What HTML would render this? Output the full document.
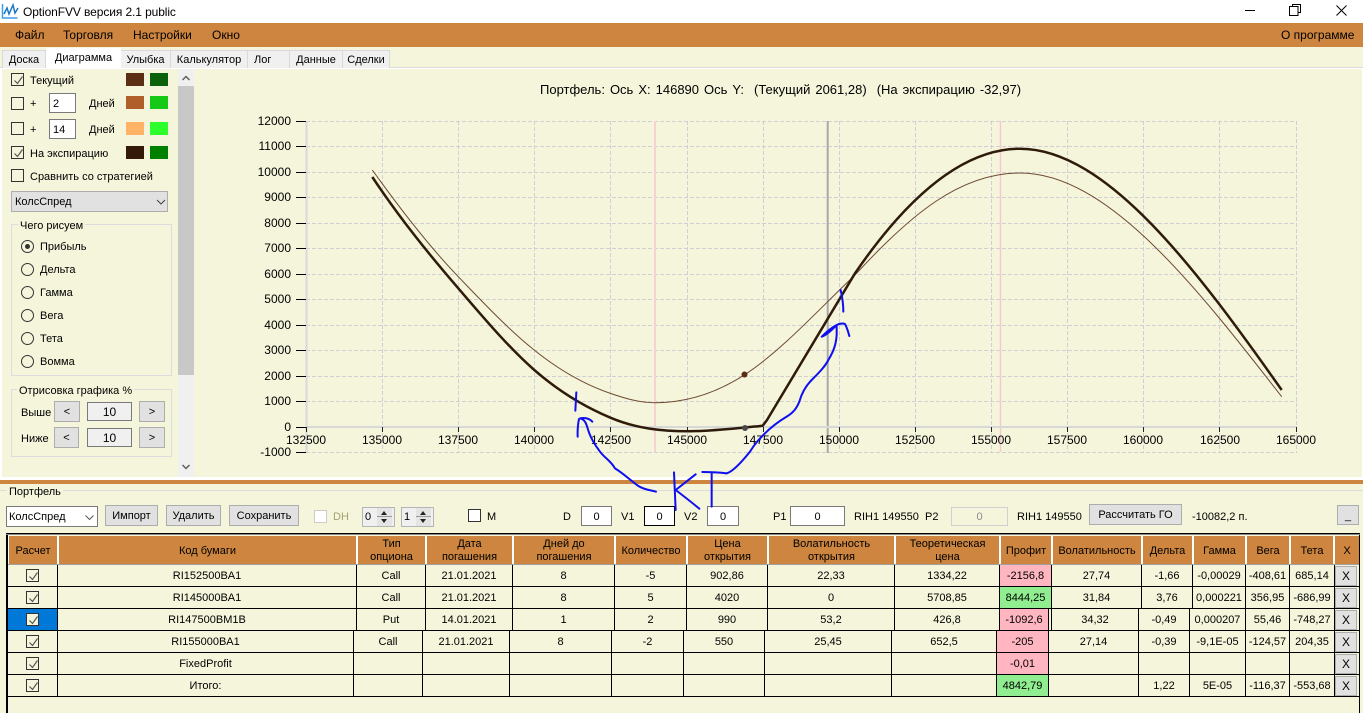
<!DOCTYPE html>
<html lang="ru"><head><meta charset="utf-8"><title>OptionFVV</title>
<style>
html,body{margin:0;padding:0}
body{width:1363px;height:713px;overflow:hidden;position:relative;background:#f5f5dc;font:11px/13px "Liberation Sans",sans-serif;color:#000}
div,span,svg{position:absolute;box-sizing:border-box}
.t{white-space:nowrap}
.tab{top:50px;height:18px;background:#f0f0f0;border:1px solid #d9d9d9;border-bottom:0;text-align:center;line-height:19px}
.cb{width:13px;height:13px;border:1px solid #333;background:#f5f5dc}
.cb svg{left:1px;top:1px}
.sw{width:18px;height:13px}
.tb{background:#fff;border:1px solid #7a7a7a;text-align:center;line-height:20px}
.btn{background:#e1e1e1;border:1px solid #adadad;text-align:center;line-height:20px}
.grp{border:1px solid #dcdcdc}
.lg{background:#f5f5dc;padding:0 2px;white-space:nowrap}
.rd{left:21px;width:13px;height:13px;border:1px solid #333;border-radius:50%;background:#f5f5dc}
.h{top:536px;height:28px;background:#cd853f;border-right:2px solid #fff;text-align:center;line-height:13px;display:flex;align-items:center;justify-content:center;padding-top:2px}
.row{left:8px;width:1351px;height:22px;border-bottom:1px solid #000}
.c{top:0;height:21px;border-right:1px solid #000;text-align:center;line-height:22px;white-space:nowrap}
.x{left:1327px;top:1px;width:22px;height:20px;background:#e1e1e1;border:1px solid #adadad;text-align:center;line-height:18px;font-size:12px}
.yl{left:250px;width:41px;text-align:right;font-size:12px;line-height:14px}
.xl{top:433px;width:60px;text-align:center;font-size:12px;line-height:14px}
.rl{left:40px}
.row .cb{top:4px}
</style></head><body>

<!-- title bar -->
<div style="left:0;top:0;width:1363px;height:23px;background:#fff"></div>
<svg style="left:1px;top:3px" width="18" height="17" viewBox="0 0 18 17"><path d="M1.500 1v14h15" fill="none" stroke="#3a9ee8" stroke-width="1.500"/><path d="M3 11l3-6 2 6 4-9 2 8 3-5" fill="none" stroke="#1b78c8" stroke-width="1.500"/></svg>
<div class="t" style="left:23px;top:5px;font-size:12px;line-height:14px;letter-spacing:-.1px">OptionFVV версия 2.1 public</div>
<div style="left:1245px;top:10px;width:10px;height:1px;background:#000"></div>
<svg style="left:1289px;top:4px" width="12" height="12" viewBox="0 0 12 12"><path d="M3.500 2.500v-2h8v8h-2M.5 2.500h8.500v9H.5z" fill="#fff" stroke="#000"/></svg>
<svg style="left:1336px;top:5px" width="11" height="11" viewBox="0 0 11 11"><path d="M.5.5l10 10M10.500.5l-10 10" stroke="#000" fill="none"/></svg>

<!-- menu -->
<div style="left:0;top:23px;width:1363px;height:24px;background:#cd853f"></div>
<div class="t" style="left:15px;top:28px;font-size:12px;line-height:14px">Файл</div>
<div class="t" style="left:63px;top:28px;font-size:12px;line-height:14px">Торговля</div>
<div class="t" style="left:133px;top:28px;font-size:12px;line-height:14px">Настройки</div>
<div class="t" style="left:212px;top:28px;font-size:12px;line-height:14px">Окно</div>
<div class="t" style="left:1281px;top:28px;font-size:12px;line-height:14px">О программе</div>

<!-- tabs -->
<div style="left:0;top:67px;width:1363px;height:1px;background:#dcdcdc"></div>
<div style="left:0;top:68px;width:1363px;height:1px;background:#fff"></div>
<div class="tab" style="left:2px;width:44px">Доска</div>
<div class="tab" style="left:120px;width:51px">Улыбка</div>
<div class="tab" style="left:170px;width:78px">Калькулятор</div>
<div class="tab" style="left:247px;width:43px;text-align:left;padding-left:6px">Лог</div>
<div class="tab" style="left:289px;width:54px">Данные</div>
<div class="tab" style="left:342px;width:48px">Сделки</div>
<div class="tab" style="left:46px;top:48px;width:75px;height:21px;background:#fff;border:0;line-height:20px">Диаграмма</div>
<div style="left:0;top:68px;width:2px;height:410px;background:#fff"></div>
<div style="left:1362px;top:68px;width:1px;height:410px;background:#fff"></div>

<!-- left panel -->
<div class="cb" style="left:11px;top:73px"><svg width="11" height="11" viewBox="0 0 11 11"><path d="M1.500 5.500l3 3 5-7" fill="none" stroke="#555" stroke-width="1.200"/></svg></div>
<div class="t" style="left:30px;top:75px">Текущий</div>
<div class="sw" style="left:126px;top:73px;background:#5c2e14"></div>
<div class="sw" style="left:150px;top:73px;background:#0b620b"></div>

<div class="cb" style="left:11px;top:97px"></div>
<div class="t" style="left:30px;top:98px">+</div>
<div class="tb" style="left:49px;top:93px;width:27px;height:20px;text-align:left;padding-left:3px">2</div>
<div class="t" style="left:89px;top:98px">Дней</div>
<div class="sw" style="left:126px;top:96px;background:#b05f2b"></div>
<div class="sw" style="left:150px;top:96px;background:#16c916"></div>

<div class="cb" style="left:11px;top:122px"></div>
<div class="t" style="left:30px;top:124px">+</div>
<div class="tb" style="left:49px;top:119px;width:27px;height:20px;text-align:left;padding-left:3px">14</div>
<div class="t" style="left:89px;top:124px">Дней</div>
<div class="sw" style="left:126px;top:122px;background:#ffb366"></div>
<div class="sw" style="left:150px;top:122px;background:#2dff2d"></div>

<div class="cb" style="left:11px;top:146px"><svg width="11" height="11" viewBox="0 0 11 11"><path d="M1.500 5.500l3 3 5-7" fill="none" stroke="#555" stroke-width="1.200"/></svg></div>
<div class="t" style="left:30px;top:148px">На экспирацию</div>
<div class="sw" style="left:126px;top:146px;background:#341a08"></div>
<div class="sw" style="left:150px;top:146px;background:#008000"></div>

<div class="cb" style="left:11px;top:169px"></div>
<div class="t" style="left:30px;top:171px">Сравнить со стратегией</div>

<div style="left:11px;top:191px;width:157px;height:21px;background:#e1e1e1;border:1px solid #adadad;line-height:21px;padding-left:3px">КолсСпред
<svg style="left:144px;top:7px" width="10" height="6" viewBox="0 0 10 6"><path d="M1 1l4 4 4-4" fill="none" stroke="#444"/></svg></div>

<div class="grp" style="left:11px;top:224px;width:161px;height:152px"></div>
<div class="lg" style="left:18px;top:220px">Чего рисуем</div>
<div class="rd" style="top:240px"><div style="left:3px;top:3px;width:5px;height:5px;border-radius:50%;background:#333"></div></div>
<div class="t rl" style="top:241px">Прибыль</div>
<div class="rd" style="top:263px"></div><div class="t rl" style="top:264px">Дельта</div>
<div class="rd" style="top:286px"></div><div class="t rl" style="top:287px">Гамма</div>
<div class="rd" style="top:309px"></div><div class="t rl" style="top:310px">Вега</div>
<div class="rd" style="top:332px"></div><div class="t rl" style="top:333px">Тета</div>
<div class="rd" style="top:355px"></div><div class="t rl" style="top:356px">Вомма</div>

<div class="grp" style="left:11px;top:389px;width:161px;height:68px"></div>
<div class="lg" style="left:17px;top:385px">Отрисовка графика %</div>
<div class="t" style="left:21px;top:407px">Выше</div>
<div class="btn" style="left:54px;top:401px;width:26px;height:21px">&lt;</div>
<div class="tb" style="left:87px;top:402px;width:45px;height:19px;background:#f0f0f0;font-size:12px;line-height:18px">10</div>
<div class="btn" style="left:139px;top:401px;width:26px;height:21px">&gt;</div>
<div class="t" style="left:21px;top:433px">Ниже</div>
<div class="btn" style="left:54px;top:427px;width:25px;height:21px">&lt;</div>
<div class="tb" style="left:87px;top:428px;width:45px;height:19px;background:#f0f0f0;font-size:12px;line-height:18px">10</div>
<div class="btn" style="left:139px;top:427px;width:26px;height:21px">&gt;</div>

<!-- scrollbar -->
<div style="left:178px;top:69px;width:16px;height:408px;background:#f0f0f0"></div>
<div style="left:178px;top:86px;width:16px;height:289px;background:#c8c8c8"></div>
<svg style="left:181px;top:75px" width="10" height="7" viewBox="0 0 10 7"><path d="M1.500 5l3.500-3.500L8.500 5" fill="none" stroke="#606060" stroke-width="1.500"/></svg>
<svg style="left:181px;top:463px" width="10" height="7" viewBox="0 0 10 7"><path d="M1.500 2l3.500 3.500L8.500 2" fill="none" stroke="#606060" stroke-width="1.500"/></svg>

<!-- chart -->
<div class="t" style="left:540px;top:83px;font-size:13px;line-height:14px;white-space:pre;word-spacing:1.400px">Портфель: Ось X: 146890 Ось Y:  (Текущий 2061,28)  (На экспирацию -32,97)</div>
<div class="yl" style="top:114px">12000</div><div class="yl" style="top:139px">11000</div><div class="yl" style="top:165px">10000</div>
<div class="yl" style="top:190px">9000</div><div class="yl" style="top:216px">8000</div><div class="yl" style="top:241px">7000</div>
<div class="yl" style="top:267px">6000</div><div class="yl" style="top:292px">5000</div><div class="yl" style="top:318px">4000</div>
<div class="yl" style="top:343px">3000</div><div class="yl" style="top:369px">2000</div><div class="yl" style="top:394px">1000</div>
<div class="yl" style="top:420px">0</div><div class="yl" style="top:445px">-1000</div>

<svg style="left:0;top:0" width="1363" height="713" viewBox="0 0 1363 713">
<g stroke="#cfcfd4" stroke-width="1" stroke-dasharray="4 2" fill="none">
<path d="M306 121.500H1297M306 146.500H1297M306 172.500H1297M306 197.500H1297M306 223.500H1297M306 248.500H1297M306 274.500H1297M306 299.500H1297M306 325.500H1297M306 350.500H1297M306 376.500H1297M306 401.500H1297M306 452.500H1297"/>
<path d="M382.500 121V452M458.500 121V452M534.500 121V452M610.500 121V452M687.500 121V452M763.500 121V452M839.500 121V452M915.500 121V452M991.500 121V452M1067.500 121V452M1143.500 121V452M1219.500 121V452M1296.500 121V452"/>
</g>
<path d="M655 121V452" stroke="#f8d2d2" stroke-width="2"/>
<path d="M1000.500 121V452" stroke="#f8c8cc" stroke-width="1.500"/>
<path d="M827.700 121V453" stroke="#a8a8a8" stroke-width="2"/>
<path d="M306.500 121V452" stroke="#d8d8d8" stroke-width="2"/>
<path d="M306 427H1297" stroke="#d8d8d8" stroke-width="2"/>
<path d="M296 121.500H306M296 146.500H306M296 172.500H306M296 197.500H306M296 223.500H306M296 248.500H306M296 274.500H306M296 299.500H306M296 325.500H306M296 350.500H306M296 376.500H306M296 401.500H306M296 427.500H306M296 452.500H306" stroke="#000"/>
<path d="M382.500 427v5M458.500 427v5M534.500 427v5M610.500 427v5M687.500 427v5M763.500 427v5M839.500 427v5M915.500 427v5M991.500 427v5M1067.500 427v5M1143.500 427v5M1219.500 427v5M1296.500 427v5M306.500 427v5" stroke="#222"/>

<path fill="none" stroke="#6e4a30" stroke-width="1" d="M372.300 170C401 210 429.600 246.900 458.300 276.700C482.800 302.200 507.200 328 531.700 348C558 369.600 584.400 384.500 610.700 393.500C625.500 398.600 640 402.700 655 402.700C684.900 402.700 714.800 394.100 744.700 374.700C781.500 350.700 818.200 310 855 275C910 215 960 173 1020 173C1107 173 1194.700 284.700 1281.700 396.700"/>
<path fill="none" stroke="#2f1b0a" stroke-width="2.500" stroke-linejoin="round" d="M372.300 177C401 220 429.600 255 458.300 288.300C483.600 317.700 509 347.900 534.300 370C559.800 392.300 585.200 407.100 610.700 417.800C636.600 428.700 662.400 431.300 688.300 431.300C713 431.300 745 427.500 762.700 425.700L767 420L855 273.300C910 193 965 148.700 1020 148.700C1107 148.700 1197 270 1281.700 390"/>
<circle cx="744.500" cy="374.500" r="3" fill="#5a2d14"/>
<circle cx="745" cy="428" r="3" fill="#4a4a4a"/>
</svg>

<div class="xl" style="left:276px">132500</div><div class="xl" style="left:352px">135000</div><div class="xl" style="left:428px">137500</div>
<div class="xl" style="left:504px">140000</div><div class="xl" style="left:581px">142500</div><div class="xl" style="left:657px">145000</div>
<div class="xl" style="left:733px">147500</div><div class="xl" style="left:809px">150000</div><div class="xl" style="left:885px">152500</div>
<div class="xl" style="left:961px">155000</div><div class="xl" style="left:1037px">157500</div><div class="xl" style="left:1113px">160000</div>
<div class="xl" style="left:1190px">162500</div><div class="xl" style="left:1266px">165000</div>

<!-- splitter -->
<div style="left:0;top:477px;width:1363px;height:3px;background:#fff"></div>
<div style="left:0;top:480px;width:1363px;height:4px;background:#cd853f"></div>

<!-- portfolio bar -->
<div style="left:0;top:490px;width:1363px;height:1px;background:#dcdcdc"></div>
<div class="lg" style="left:7px;top:486px">Портфель</div>

<div style="left:6px;top:506px;width:92px;height:21px;background:#fff;border:1px solid #7a7a7a;line-height:21px;padding-left:2px">КолсСпред
<svg style="left:78px;top:8px" width="9" height="5" viewBox="0 0 9 5"><path d="M.5.5l4 4 4-4" fill="none" stroke="#555"/></svg></div>
<div class="btn" style="left:105px;top:505px;width:53px;height:21px">Импорт</div>
<div class="btn" style="left:166px;top:505px;width:55px;height:21px">Удалить</div>
<div class="btn" style="left:229px;top:505px;width:70px;height:21px">Сохранить</div>
<div style="left:314px;top:510px;width:13px;height:13px;background:#fff;border:1px solid #ccc"></div>
<div class="t" style="left:333px;top:511px;color:#a3a36f">DH</div>

<div style="left:362px;top:507px;width:33px;height:20px;background:#f0f0f0;border:1px solid #b5b5b5;line-height:18px;padding-left:2px">0</div>
<div style="left:377px;top:508px;width:15px;height:18px;background:#e4e4e4"><div style="left:0;top:8px;width:15px;height:1px;background:#999"></div><div style="left:4px;top:3px;border:3.500px solid transparent;border-top:0;border-bottom:4px solid #222"></div><div style="left:4px;top:11px;border:3.500px solid transparent;border-bottom:0;border-top:4px solid #222"></div></div>
<div style="left:401px;top:507px;width:33px;height:20px;background:#f0f0f0;border:1px solid #b5b5b5;line-height:18px;padding-left:2px">1</div>
<div style="left:416px;top:508px;width:15px;height:18px;background:#e4e4e4"><div style="left:0;top:8px;width:15px;height:1px;background:#999"></div><div style="left:4px;top:3px;border:3.500px solid transparent;border-top:0;border-bottom:4px solid #222"></div><div style="left:4px;top:11px;border:3.500px solid transparent;border-bottom:0;border-top:4px solid #222"></div></div>

<div class="cb" style="left:468px;top:509px;background:#fff"></div>
<div class="t" style="left:487px;top:511px">M</div>
<div class="t" style="left:563px;top:511px">D</div>
<div class="tb" style="left:581px;top:506px;width:31px;height:20px">0</div>
<div class="t" style="left:621px;top:511px">V1</div>
<div class="tb" style="left:644px;top:506px;width:31px;height:20px;border-color:#000">0</div>
<div class="t" style="left:684px;top:511px">V2</div>
<div class="tb" style="left:707px;top:506px;width:32px;height:20px">0</div>
<div class="t" style="left:773px;top:511px">P1</div>
<div class="tb" style="left:790px;top:506px;width:55px;height:20px">0</div>
<div class="t" style="left:854px;top:511px">RIH1 149550</div>
<div class="t" style="left:925px;top:511px">P2</div>
<div class="tb" style="left:951px;top:507px;width:57px;height:19px;background:#f5f5dc;border-color:#d0d0d0;color:#8a8a8a;line-height:19px">0</div>
<div class="t" style="left:1017px;top:511px">RIH1 149550</div>
<div class="btn" style="left:1089px;top:504px;width:93px;height:21px">Рассчитать ГО</div>
<div class="t" style="left:1192px;top:511px">-10082,2 п.</div>
<div class="btn" style="left:1337px;top:505px;width:22px;height:20px">_</div>

<!-- table frame -->
<div style="left:6px;top:533px;width:1354px;height:180px;border:1px solid #000;border-left-width:2px;border-bottom:0"></div>
<div style="left:6px;top:534px;width:1354px;height:1px;background:#888"></div>
<div style="left:8px;top:564px;width:1351px;height:1px;background:#a0a0a0"></div>

<!-- header -->
<div class="h" style="left:8px;width:51px;border-left:1px solid #fff">Расчет</div>
<div class="h" style="left:59px;width:299px">Код бумаги</div>
<div class="h" style="left:358px;width:69px">Тип<br>опциона</div>
<div class="h" style="left:427px;width:87px">Дата<br>погашения</div>
<div class="h" style="left:514px;width:102px">Дней до<br>погашения</div>
<div class="h" style="left:616px;width:72px">Количество</div>
<div class="h" style="left:688px;width:81px">Цена<br>открытия</div>
<div class="h" style="left:769px;width:127px">Волатильность<br>открытия</div>
<div class="h" style="left:896px;width:105px">Теоретическая<br>цена</div>
<div class="h" style="left:1001px;width:52px">Профит</div>
<div class="h" style="left:1053px;width:90px">Волатильность</div>
<div class="h" style="left:1143px;width:51px">Дельта</div>
<div class="h" style="left:1194px;width:53px">Гамма</div>
<div class="h" style="left:1247px;width:44px">Вега</div>
<div class="h" style="left:1291px;width:44px">Тета</div>
<div class="h" style="left:1335px;width:24px;border-right:0">X</div>

<!-- rows -->
<div class="row" style="top:565px">
<span class="c" style="left:0;width:50px"></span><span class="cb" style="left:18px"><svg width="11" height="11" viewBox="0 0 11 11"><path d="M1.500 5.500l3 3 5-7" fill="none" stroke="#555" stroke-width="1.200"/></svg></span>
<span class="c" style="left:50px;width:299px">RI152500BA1</span><span class="c" style="left:349px;width:69px">Call</span><span class="c" style="left:418px;width:87px">21.01.2021</span><span class="c" style="left:505px;width:102px">8</span><span class="c" style="left:607px;width:72px">-5</span><span class="c" style="left:679px;width:81px">902,86</span><span class="c" style="left:760px;width:127px">22,33</span><span class="c" style="left:887px;width:105px">1334,22</span><span class="c" style="left:992px;width:52px;background:#ffb6c1">-2156,8</span><span class="c" style="left:1044px;width:90px">27,74</span><span class="c" style="left:1134px;width:51px">-1,66</span><span class="c" style="left:1185px;width:53px">-0,00029</span><span class="c" style="left:1238px;width:44px">-408,61</span><span class="c" style="left:1282px;width:45px">685,14</span><span class="x">X</span></div>

<div class="row" style="top:587px">
<span class="c" style="left:0;width:50px"></span><span class="cb" style="left:18px"><svg width="11" height="11" viewBox="0 0 11 11"><path d="M1.500 5.500l3 3 5-7" fill="none" stroke="#555" stroke-width="1.200"/></svg></span>
<span class="c" style="left:50px;width:299px">RI145000BA1</span><span class="c" style="left:349px;width:69px">Call</span><span class="c" style="left:418px;width:87px">21.01.2021</span><span class="c" style="left:505px;width:102px">8</span><span class="c" style="left:607px;width:72px">5</span><span class="c" style="left:679px;width:81px">4020</span><span class="c" style="left:760px;width:127px">0</span><span class="c" style="left:887px;width:105px">5708,85</span><span class="c" style="left:992px;width:52px;background:#90ee90">8444,25</span><span class="c" style="left:1044px;width:90px">31,84</span><span class="c" style="left:1134px;width:51px">3,76</span><span class="c" style="left:1185px;width:53px">0,000221</span><span class="c" style="left:1238px;width:44px">356,95</span><span class="c" style="left:1282px;width:45px">-686,99</span><span class="x">X</span></div>

<div class="row" style="top:609px">
<span class="c" style="left:0;width:50px;background:#0078d7"></span><span class="cb" style="left:18px"><svg width="11" height="11" viewBox="0 0 11 11"><path d="M1.500 5.500l3 3 5-7" fill="none" stroke="#555" stroke-width="1.200"/></svg></span>
<span class="c" style="left:50px;width:299px">RI147500BM1B</span><span class="c" style="left:349px;width:69px">Put</span><span class="c" style="left:418px;width:87px">14.01.2021</span><span class="c" style="left:505px;width:102px">1</span><span class="c" style="left:607px;width:72px">2</span><span class="c" style="left:679px;width:81px">990</span><span class="c" style="left:760px;width:127px">53,2</span><span class="c" style="left:887px;width:105px">426,8</span><span class="c" style="left:992px;width:49px;background:#ffb6c1">-1092,6</span><span class="c" style="left:1041px;width:3px"></span><span class="c" style="left:1044px;width:87px">34,32</span><span class="c" style="left:1131px;width:51px">-0,49</span><span class="c" style="left:1182px;width:56px">0,000207</span><span class="c" style="left:1238px;width:44px">55,46</span><span class="c" style="left:1282px;width:45px">-748,27</span><span class="x">X</span></div>

<div class="row" style="top:631px">
<span class="c" style="left:0;width:50px"></span><span class="cb" style="left:18px"><svg width="11" height="11" viewBox="0 0 11 11"><path d="M1.500 5.500l3 3 5-7" fill="none" stroke="#555" stroke-width="1.200"/></svg></span>
<span class="c" style="left:50px;width:296px">RI155000BA1</span><span class="c" style="left:346px;width:69px">Call</span><span class="c" style="left:415px;width:87px">21.01.2021</span><span class="c" style="left:502px;width:102px">8</span><span class="c" style="left:604px;width:72px">-2</span><span class="c" style="left:676px;width:81px">550</span><span class="c" style="left:757px;width:127px">25,45</span><span class="c" style="left:884px;width:105px">652,5</span><span class="c" style="left:989px;width:52px;background:#ffb6c1">-205</span><span class="c" style="left:1041px;width:90px">27,14</span><span class="c" style="left:1131px;width:51px">-0,39</span><span class="c" style="left:1182px;width:56px">-9,1E-05</span><span class="c" style="left:1238px;width:44px">-124,57</span><span class="c" style="left:1282px;width:45px">204,35</span><span class="x">X</span></div>

<div class="row" style="top:653px">
<span class="c" style="left:0;width:50px"></span><span class="cb" style="left:18px"><svg width="11" height="11" viewBox="0 0 11 11"><path d="M1.500 5.500l3 3 5-7" fill="none" stroke="#555" stroke-width="1.200"/></svg></span>
<span class="c" style="left:50px;width:296px">FixedProfit</span><span class="c" style="left:346px;width:69px"></span><span class="c" style="left:415px;width:87px"></span><span class="c" style="left:502px;width:102px"></span><span class="c" style="left:604px;width:72px"></span><span class="c" style="left:676px;width:81px"></span><span class="c" style="left:757px;width:127px"></span><span class="c" style="left:884px;width:105px"></span><span class="c" style="left:989px;width:52px;background:#ffb6c1">-0,01</span><span class="c" style="left:1041px;width:90px"></span><span class="c" style="left:1131px;width:51px"></span><span class="c" style="left:1182px;width:56px"></span><span class="c" style="left:1238px;width:44px"></span><span class="c" style="left:1282px;width:45px"></span><span class="x">X</span></div>

<div class="row" style="top:675px">
<span class="c" style="left:0;width:50px"></span><span class="cb" style="left:18px"><svg width="11" height="11" viewBox="0 0 11 11"><path d="M1.500 5.500l3 3 5-7" fill="none" stroke="#555" stroke-width="1.200"/></svg></span>
<span class="c" style="left:50px;width:296px">Итого:</span><span class="c" style="left:346px;width:69px"></span><span class="c" style="left:415px;width:87px"></span><span class="c" style="left:502px;width:102px"></span><span class="c" style="left:604px;width:72px"></span><span class="c" style="left:676px;width:81px"></span><span class="c" style="left:757px;width:127px"></span><span class="c" style="left:884px;width:105px"></span><span class="c" style="left:989px;width:52px;background:#90ee90">4842,79</span><span class="c" style="left:1041px;width:90px"></span><span class="c" style="left:1131px;width:51px">1,22</span><span class="c" style="left:1182px;width:56px">5E-05</span><span class="c" style="left:1238px;width:44px">-116,37</span><span class="c" style="left:1282px;width:45px">-553,68</span><span class="x">X</span></div>

<!-- blue hand annotations -->
<svg style="left:0;top:0" width="1363" height="713" viewBox="0 0 1363 713">
<g transform="translate(530 270) scale(.33333)" fill="none" stroke="#0f0ff0" stroke-width="6" stroke-linecap="round" stroke-linejoin="round">
<path d="M378 665C360 660 345 660 325 648C300 630 280 610 255 595C240 570 225 565 210 545C195 525 185 510 178 490C170 470 170 450 150 445C165 442 178 445 187 455M147 447Q142 470 143 500"/>
<path d="M139 367L136 422"/>
<path d="M432 607L437 720M497 613L437 660Q470 685 508 716"/>
<path d="M517 606Q560 606 590 610M545 608V710"/>
<path d="M590 610C610 605 640 570 660 545C675 520 690 505 705 490C725 470 745 455 770 440C790 428 800 415 808 395C815 370 825 350 845 330C865 310 885 290 895 270C910 245 918 225 920 195L920 165Q935 158 945 162Q952 175 958 198M920 165C900 175 885 190 875 200C890 195 905 180 920 165"/>
<path d="M940 125Q940 95 932 60"/>
</g>
</svg>
</body></html>
